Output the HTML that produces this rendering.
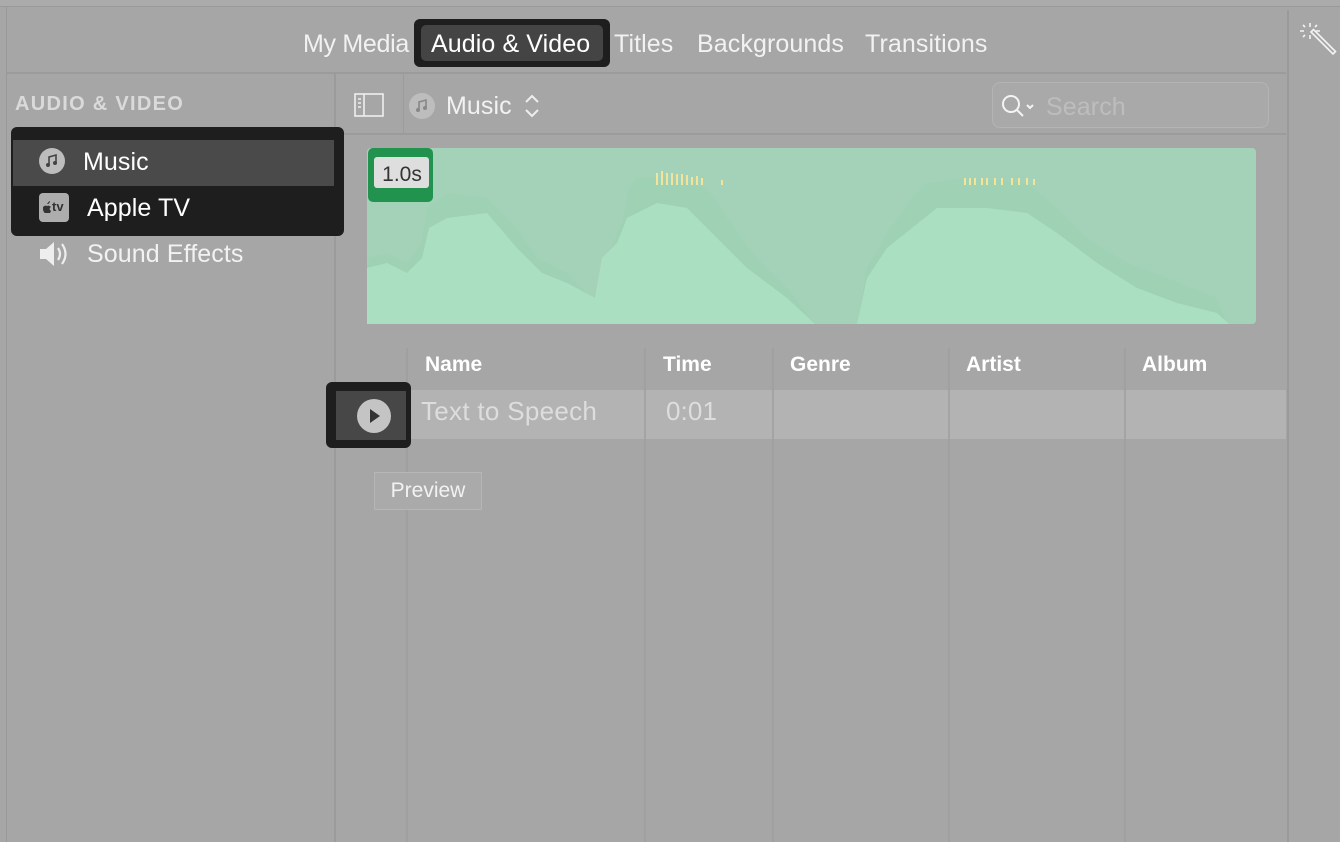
<!DOCTYPE html>
<html><head><style>
body{margin:0;width:1340px;height:842px;background:#a6a6a6;font-family:"Liberation Sans",sans-serif;position:relative;overflow:hidden;color:#f2f2f2}
.a{position:absolute}
.t{font-size:25px;white-space:nowrap;letter-spacing:0.1px}
</style></head><body>
<div class="a" style="left:0;top:0;width:1340px;height:6px;background:#ababab;border-bottom:1px solid #9a9a9a"></div>
<div class="a" style="left:6px;top:7px;width:1px;height:835px;background:#999"></div>
<div class="a" style="left:7px;top:72px;width:1279px;height:2px;background:#9b9b9b"></div>
<div class="a" style="left:1287px;top:10px;width:2px;height:832px;background:#9a9a9a"></div>
<div class="a" style="left:334px;top:74px;width:2px;height:768px;background:#9b9b9b"></div>
<div class="a" style="left:403px;top:74px;width:1px;height:60px;background:#9b9b9b"></div>
<div class="a" style="left:336px;top:133px;width:950px;height:2px;background:#9b9b9b"></div>

<div class="a t" style="left:303px;top:30px;letter-spacing:-0.3px">My Media</div>
<div class="a" style="left:414px;top:19px;width:196px;height:48px;background:#1e1e1e;border-radius:6px"></div>
<div class="a" style="left:421px;top:25px;width:182px;height:36px;background:#444;border-radius:5px"></div>
<div class="a t" style="left:431px;top:30px;color:#fff">Audio &amp; Video</div>
<div class="a t" style="left:614px;top:30px">Titles</div>
<div class="a t" style="left:697px;top:30px">Backgrounds</div>
<div class="a t" style="left:865px;top:30px">Transitions</div>

<svg class="a" style="left:1296px;top:20px" width="42" height="42" viewBox="0 0 42 42" stroke="#f4f4f4" stroke-width="1.6" fill="none">
<path d="M14 3v4M14 15v4M4 11h4M20 11h4M7 5l2 2M21 5l-2 2M7 17l2-2"/>
<path d="M15 12l2.5-2.5 22 22-2.5 2.5z"/>
</svg>

<div class="a" style="left:15px;top:93px;font-size:20px;font-weight:bold;color:#dadada;letter-spacing:1.3px">AUDIO &amp; VIDEO</div>
<div class="a" style="left:11px;top:127px;width:333px;height:109px;background:#1e1e1e;border-radius:6px"></div>
<div class="a" style="left:13px;top:140px;width:321px;height:46px;background:#4a4a4a"></div>
<svg class="a" style="left:38px;top:147px" width="28" height="28"><circle cx="14" cy="14" r="13" fill="#bdbdbd"/><path d="M11 18V10l7-2v8" stroke="#444" stroke-width="1.6" fill="none"/><circle cx="10" cy="18" r="2" fill="#444"/><circle cx="17" cy="16" r="2" fill="#444"/></svg>
<div class="a t" style="left:83px;top:148px;color:#fff">Music</div>
<div class="a" style="left:39px;top:193px;width:30px;height:29px;background:#adadad;border-radius:4px"></div>
<svg class="a" style="left:42px;top:201px" width="10" height="12"><path d="M5 3q2-3 3-3 0 2-2 3zM1 6q2-2 4-1 2-1 4 1-2 1-1 3 1 1 1 1-1 3-3 3-1-1-2 0-3-2-3-5z" fill="#333"/></svg>
<div class="a" style="left:52px;top:199px;font-size:13px;font-weight:bold;color:#333">tv</div>
<div class="a t" style="left:87px;top:194px;color:#fff">Apple TV</div>
<svg class="a" style="left:38px;top:240px" width="32" height="28" fill="#eee"><path d="M2 9h6l8-7v24l-8-7H2z"/><path d="M20 8q4 6 0 12M24 4q7 10 0 20" stroke="#eee" stroke-width="2.2" fill="none"/></svg>
<div class="a t" style="left:87px;top:240px">Sound Effects</div>

<svg class="a" style="left:354px;top:93px" width="30" height="24" fill="none" stroke="#eee" stroke-width="1.6"><rect x="1" y="1" width="28" height="22"/><path d="M10 1v22M4 6h3M4 10h3M4 14h3"/></svg>
<svg class="a" style="left:408px;top:92px" width="28" height="28"><circle cx="14" cy="14" r="13" fill="#bdbdbd"/><path d="M11 18V10l7-2v8" stroke="#888" stroke-width="1.6" fill="none"/><circle cx="10" cy="18" r="2" fill="#888"/><circle cx="17" cy="16" r="2" fill="#888"/></svg>
<div class="a t" style="left:446px;top:92px">Music</div>
<svg class="a" style="left:524px;top:94px" width="16" height="24" fill="none" stroke="#eee" stroke-width="2"><path d="M2 8l6-6 6 6M2 16l6 6 6-6"/></svg>

<div class="a" style="left:992px;top:82px;width:275px;height:44px;border:1px solid #b4b4b4;border-radius:8px;background:#a9a9a9"></div>
<svg class="a" style="left:1000px;top:93px" width="40" height="28" fill="none" stroke="#f4f4f4" stroke-width="2"><circle cx="11" cy="11" r="8"/><path d="M17 17l6 6M27 12l3 3 3-3"/></svg>
<div class="a t" style="left:1046px;top:93px;color:#bdbdbd">Search</div>

<svg class="a" style="left:367px;top:148px" width="889" height="176" viewBox="0 0 889 176">
<rect width="889" height="176" rx="4" fill="#a4d2b8"/>
<path d="M0 176V110L20 105 40 115 55 95 60 60 80 45 120 50 150 80 170 110 200 125 225 150 233 158 240 110 255 75 262 40 270 30 300 30 340 40 360 70 390 110 420 140 448 176H490L500 120 520 85 545 50 560 35 600 30 660 35 690 60 720 90 760 115 800 130 850 150 860 176Z" fill="#8fd1ad" opacity=".25"/>
<path d="M0 176V120L20 115 40 125 55 110 62 80 80 70 120 65 150 100 175 125 200 135 228 150 235 110 250 95 260 70 290 55 320 60 350 90 380 120 420 150 448 176H490L500 130 520 100 545 80 570 60 620 60 660 65 690 85 730 115 770 140 810 155 850 165 862 176Z" fill="#abdfc2"/>
<g stroke="#f2e49a" stroke-width="2"><path d="M290 25v12M295 23v14M300 25v12M305 25v12M310 26v11M315 26v11M320 27v10M325 29v8M330 28v9M335 30v7M355 32v5M598 30v7M603 30v7M608 30v7M615 30v7M620 30v7M628 30v7M635 30v7M645 30v7M652 30v7M660 30v7M667 31v6"/></g>
<rect x="1" y="0" width="65" height="54" rx="5" fill="#22924f"/>
<rect x="7" y="9" width="55" height="31" rx="3" fill="#dedede"/>
<text x="35" y="33" font-size="21" fill="#333" text-anchor="middle" font-family="Liberation Sans">1.0s</text>
</svg>

<div class="a" style="left:406px;top:348px;width:2px;height:494px;background:#a0a0a0"></div>
<div class="a" style="left:644px;top:348px;width:2px;height:494px;background:#a0a0a0"></div>
<div class="a" style="left:772px;top:348px;width:2px;height:494px;background:#a0a0a0"></div>
<div class="a" style="left:948px;top:348px;width:2px;height:494px;background:#a0a0a0"></div>
<div class="a" style="left:1124px;top:348px;width:2px;height:494px;background:#a0a0a0"></div>
<div class="a" style="left:425px;top:353px;font-size:21px;font-weight:bold;color:#fff">Name</div>
<div class="a" style="left:663px;top:353px;font-size:21px;font-weight:bold;color:#fff">Time</div>
<div class="a" style="left:790px;top:353px;font-size:21px;font-weight:bold;color:#fff">Genre</div>
<div class="a" style="left:966px;top:353px;font-size:21px;font-weight:bold;color:#fff">Artist</div>
<div class="a" style="left:1142px;top:353px;font-size:21px;font-weight:bold;color:#fff">Album</div>
<div class="a" style="left:408px;top:390px;width:878px;height:49px;background:#b3b3b3"></div>
<div class="a" style="left:644px;top:390px;width:2px;height:49px;background:#a4a4a4"></div>
<div class="a" style="left:772px;top:390px;width:2px;height:49px;background:#a4a4a4"></div>
<div class="a" style="left:948px;top:390px;width:2px;height:49px;background:#a4a4a4"></div>
<div class="a" style="left:1124px;top:390px;width:2px;height:49px;background:#a4a4a4"></div>
<div class="a" style="left:326px;top:382px;width:85px;height:66px;background:#1e1e1e;border-radius:6px"></div>
<div class="a" style="left:336px;top:391px;width:70px;height:49px;background:#474747"></div>
<svg class="a" style="left:356px;top:398px" width="36" height="36"><circle cx="18" cy="18" r="17" fill="#c4c4c4"/><path d="M14 11l10 7-10 7z" fill="#333"/></svg>
<div class="a t" style="left:421px;top:396px;color:#ddd;font-size:26px;letter-spacing:0.3px">Text to Speech</div>
<div class="a t" style="left:666px;top:396px;color:#ddd;font-size:26px">0:01</div>
<div class="a" style="left:374px;top:472px;width:106px;height:36px;border:1px solid #b6b6b6;background:#aaa;font-size:21px;color:#f2f2f2;text-align:center;line-height:36px">Preview</div>
</body></html>
